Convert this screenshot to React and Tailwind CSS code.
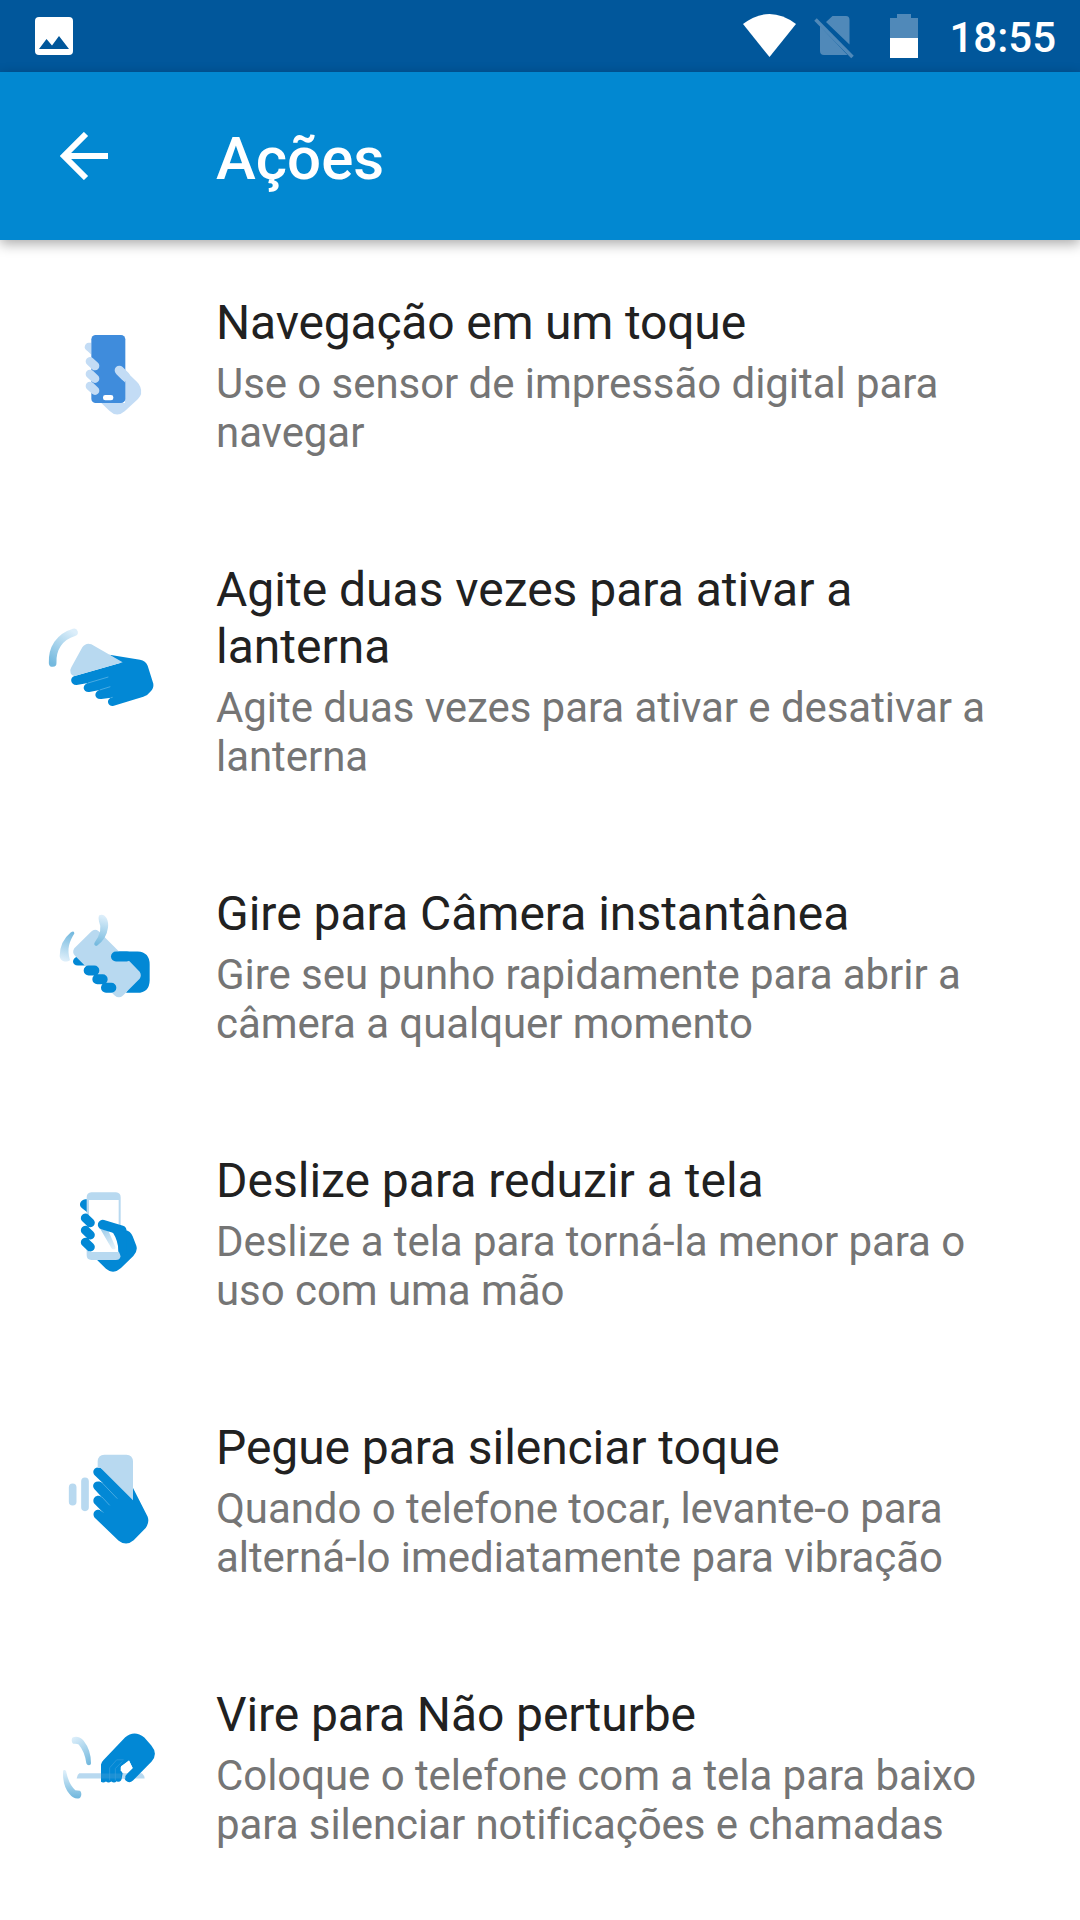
const BLUE = "#0288d5";
const PALE = "#b8d9f0";

/* Every drawing uses a grid three times finer than the pixel grid. */
function Art({ x, y, children }) {
  return (
    <svg width="216" height="120" viewBox="0 0 216 120" fill="none" className="block shrink-0">
      <g transform={`translate(${x} ${y}) scale(0.33333)`}>{children}</g>
    </svg>
  );
}

function Fade({ id, x1, y1, x2, y2 }) {
  return (
    <linearGradient id={id} gradientUnits="userSpaceOnUse" x1={x1} y1={y1} x2={x2} y2={y2}>
      <stop offset="0" stopColor="#74b9de" />
      <stop offset="1" stopColor="#dceefa" />
    </linearGradient>
  );
}

function OneTouchArt() {
  return (
    <Art x={70} y={4}>
      <path d="M64 68H56C50 68 44 74 44 82C44 89 52 92 64 104Z" fill="#c3dcf5" />
      <path d="M94 249L119 273Q141 294 164 274L204 237Q219 222 211 201Q208 193 202 187L165 151V249Z" fill="#c3dcf5" />
      <rect x="64" y="45" width="102" height="204" rx="13" fill="#3f8cdc" />
      <path d="M60 124L75 138M60 162L75 176M60 198L75 212" stroke="#c3dcf5" strokeWidth="26" strokeLinecap="round" />
      <path d="M148 151L166 169" stroke="#c3dcf5" strokeWidth="28" strokeLinecap="round" />
      <path d="M139 161L166 188V160Z" fill="#c3dcf5" />
      <rect x="99" y="225" width="31" height="16" rx="7" fill="#fff" />
    </Art>
  );
}

function ShakeArt() {
  return (
    <Art x={40} y={9}>
      <defs><Fade id="shake" x1="38" y1="128" x2="103" y2="34" /></defs>
      <path d="M38 126C36 83 58 47 102 34" stroke="url(#shake)" strokeWidth="23" strokeLinecap="round" />
      <path d="M208 101L300 116Q317 119 323 134L340 188Q342 202 331 212Q325 221 310 227L219 255C203 256 199 237 211 231L213 230L184 234C165 237 159 215 177 208L179 207L148 213C130 215 124 194 142 187L144 186L110 192C92 193 87 170 104 165L243 125Z" fill={BLUE} />
      <path d="M92 157Q88 148 94 139L127 79Q138 64 154 70L248 124L104 165Q96 166 92 157Z" fill={PALE} />
      <path d="M144 186L205 168M179 207L211 197M213 230L218 229" stroke="#6bbbe8" strokeWidth="2" />
    </Art>
  );
}

function TwistArt() {
  return (
    <Art x={50} y={-1.5}>
      <defs>
        <Fade id="twist-l" x1="68" y1="82" x2="44" y2="164" />
        <Fade id="twist-r" x1="138" y1="118" x2="158" y2="32" />
      </defs>
      <path d="M62 81Q29 108 29 152C31 168 49 172 60 164C50 130 58 108 73 84Q73 74 62 81Z" fill="url(#twist-l)" />
      <path d="M198 138H263Q299 140 299 177V225Q298 262 262 262H228L255 215L235 168H198Z" fill={BLUE} />
      <path d="M84 153L105 180H84C64 180 64 157 84 153Z" fill={BLUE} />
      <path d="M73 128L124 78Q134 68 146 77L207 138L240 169L269 199Q276 209 269 220L219 270Q207 281 194 270L75 151Q65 140 73 128Z" fill={PALE} />
      <path d="M198 153H230" stroke={BLUE} strokeWidth="30" strokeLinecap="round" />
      <path d="M116 195H133M142 221H158M168 247H184" stroke={BLUE} strokeWidth="30" strokeLinecap="round" />
      <path d="M147 30C163 21 178 42 174 66Q170 99 142 120C136 124 130 117 134 111Q160 75 147 48Q144 37 147 30Z" fill="url(#twist-r)" />
    </Art>
  );
}

function ShrinkArt() {
  return (
    <Art x={65} y={6}>
      <defs>
        <linearGradient id="swipe" gradientUnits="userSpaceOnUse" x1="115" y1="145" x2="147" y2="205">
          <stop offset="0" stopColor="#9ecdeb" />
          <stop offset="1" stopColor="#e6f2fa" />
        </linearGradient>
      </defs>
      <path d="M72 58C56 56 45 62 45 74C45 85 61 88 70 101Z" fill={BLUE} />
      <path d="M94 238L123 266Q145 285 168 264L205 228Q219 214 214 197L203 169Q197 153 180 150L161 145V238Z" fill={BLUE} />
      <path fillRule="evenodd" d="M79 37H153Q167 38 167 52V226Q167 240 153 240H79Q65 240 65 226V52Q65 38 79 37ZM72 60V216H161V60Z" fill={PALE} />
      <path d="M106 147L130 152L151 200C154 208 143 211 139 204Z" fill="url(#swipe)" />
      <path d="M113 134L170 151V192L161 215Q159 181 144 158Z" fill={BLUE} />
      <path d="M113 134L170 151" stroke={BLUE} strokeWidth="29" strokeLinecap="round" />
      <path d="M161 150V214L167 228L185 220V155Z" fill={BLUE} />
      <path d="M61 114L76 128M61 151L76 165M61 187L76 201" stroke={BLUE} strokeWidth="27" strokeLinecap="round" />
    </Art>
  );
}

function PickUpArt() {
  return (
    <Art x={55} y={-1}>
      <path d="M53 142V185M90 124V202" stroke={PALE} strokeWidth="23" strokeLinecap="round" />
      <path d="M233 142L278 230Q284 247 272 264L236 301Q214 320 191 302L120 234C109 222 120 207 134 210L142 215L120 193C108 181 120 163 135 168L142 173L120 149C107 137 118 120 137 126L144 130L119 106C107 91 123 76 139 85Z" fill={BLUE} />
      <path d="M128 84V64Q129 45 148 44H214Q233 45 234 64V181L137 84Z" fill={PALE} />
      <path d="M139 126L187 176M141 171L164 196M140 213L145 218" stroke="#6bbbe8" strokeWidth="2" />
    </Art>
  );
}

function FlipArt() {
  return (
    <Art x={50} y={12.5}>
      <defs>
        <Fade id="flip-t" x1="118" y1="130" x2="68" y2="52" />
        <Fade id="flip-b" x1="40" y1="230" x2="40" y2="154" />
      </defs>
      <path d="M68 51C76 46 92 48 101 61Q123 89 123 128C123 136 111 136 109 128Q104 93 86 72Q81 69 70 70C64 66 64 55 68 51Z" fill="url(#flip-t)" />
      <path d="M39 155C39 145 48 148 49 155Q57 193 76 209L90 211C98 219 93 235 84 234Q69 235 58 220Q38 196 39 155Z" fill="url(#flip-b)" />
      <path d="M88 158H276Q284 165 284 174H80Q80 163 88 158Z" fill={PALE} />
      <path d="M153 184V132Q154 125 160 119L225 51Q253 27 283 51L304 75Q325 100 305 123L249 180Q238 190 227 180Q220 172 228 163L248 143L237 120L213 137V148L222 158L213 180Q207 186 200 182Q193 189 184 183Q175 189 168 183Q160 188 153 184Z" fill={BLUE} />
      <path d="M212 140L237 120L248 142L227 163L218 158L212 149Z" fill="#fff" />
      <path d="M218 158H232L226 166V174H215Z" fill={PALE} />
      <path d="M153 159H213V174H153Z" fill="#1c91d5" />
      <path d="M221 118H200L179 142V180M217 123L196 144V180" stroke="#3a9fdc" strokeWidth="2" />
    </Art>
  );
}

const actions = [
  { Icon: OneTouchArt, tracking: "tracking-[-0.18px]", title: ["Navegação em um toque"], text: ["Use o sensor de impressão digital para", "navegar"] },
  { Icon: ShakeArt, tracking: "tracking-normal", title: ["Agite duas vezes para ativar a", "lanterna"], text: ["Agite duas vezes para ativar e desativar a", "lanterna"] },
  { Icon: TwistArt, tracking: "tracking-normal", title: ["Gire para Câmera instantânea"], text: ["Gire seu punho rapidamente para abrir a", "câmera a qualquer momento"] },
  { Icon: ShrinkArt, tracking: "tracking-normal", title: ["Deslize para reduzir a tela"], text: ["Deslize a tela para torná-la menor para o", "uso com uma mão"] },
  { Icon: PickUpArt, tracking: "tracking-[-0.07px]", title: ["Pegue para silenciar toque"], text: ["Quando o telefone tocar, levante-o para", "alterná-lo imediatamente para vibração"] },
  { Icon: FlipArt, tracking: "tracking-[-0.1px]", title: ["Vire para Não perturbe"], text: ["Coloque o telefone com a tela para baixo", "para silenciar notificações e chamadas"] },
];

function StatusBar() {
  return (
    <div className="flex h-[72px] items-center bg-[#01579b] pl-[35px] pr-[24px] text-white">
      <svg width="38" height="38" viewBox="0 0 38 38">
        <rect width="38" height="38" rx="4" fill="#fff" />
        <path d="M4 32L11.500 22L17 28.500L24 19L34 32Z" fill="#01579b" />
      </svg>
      <svg width="178" height="72" viewBox="0 0 178 72" className="ml-auto">
        <path d="M3 24Q29.500 4 56 24L29.500 57Z" fill="#fff" />
        <path d="M86 22L92.500 16H106Q109.500 16 109.500 20V44.500ZM80 26L107.500 55H84Q80 55 80 51Z" fill="#5089b9" />
        <path d="M75.500 19.500L112.500 57" stroke="#5089b9" strokeWidth="3.500" />
        <path d="M157 14H171V18H178V38H150V18H157Z" fill="#5089b9" />
        <path d="M150 38H178V58H150Z" fill="#fff" />
      </svg>
      <span className="ml-[31px] mt-[3px] text-[42px] font-medium leading-[50px]">18:55</span>
    </div>
  );
}

export default function App() {
  return (
    <div className="flex h-[1920px] w-[1080px] flex-col overflow-hidden bg-white font-['Roboto',sans-serif]">
      <StatusBar />
      <header className="relative flex h-[168px] items-center bg-[#0288d1] pl-[60px] text-white shadow-[0_4px_12px_rgba(0,0,0,0.33)]">
        <svg width="48" height="48" viewBox="0 0 48 48" fill="none" className="block">
          <path d="M48 24H6M26 2L4 24L26 46" stroke="#fff" strokeWidth="6" />
        </svg>
        <h1 className="ml-[108px] mt-[6px] text-[60px] font-medium leading-[70px]">Ações</h1>
      </header>
      <main>
        {actions.map(({ Icon, tracking, title, text }) => (
          <section key={title[0]} className="flex items-center pb-[50px] pt-[55px]">
            <Icon />
            <div>
              <h2 className={`-mt-px text-[48px] leading-[57px] text-[#212121] ${tracking}`}>
                {title.map((line) => <span key={line} className="block whitespace-nowrap">{line}</span>)}
              </h2>
              <p className="mt-2 text-[42px] leading-[49px] tracking-[-0.06px] text-[#757575]">
                {text.map((line) => <span key={line} className="block whitespace-nowrap">{line}</span>)}
              </p>
            </div>
          </section>
        ))}
      </main>
    </div>
  );
}
